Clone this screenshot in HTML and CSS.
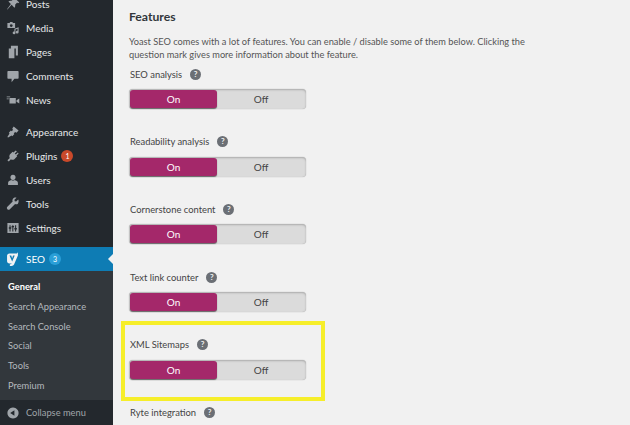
FILE: index.html
```html
<!DOCTYPE html>
<html lang="en">
<head>
<meta charset="utf-8">
<title>Yoast SEO Features</title>
<link rel="stylesheet" href="styles.css">
</head>
<body>
<div class="page">
  <nav class="side">
    <ul class="menu">
      <li class="item"><svg class="ico" viewBox="0 0 20 20"><path d="M12 1l7 7-2 1-1-1-3 3c.5 2 0 3.500-1 4.500L8 11l-6 7-.5-.5L7 10 3.500 6.500C4.500 5.500 6 5 8 5.500l3-3-1-1z"/></svg><span>Posts</span></li>
      <li class="item"><svg class="ico" viewBox="0 0 20 20"><path d="M2 3h3l1-1.500h3L10 3h3v7H2zM7.500 4.500a2 2 0 1 0 .01 0zM12 11l6-2v7a2 2 0 1 1-1.500-2v-3l-3 1v5a2 2 0 1 1-1.500-2z" fill-rule="evenodd"/></svg><span>Media</span></li>
      <li class="item"><svg class="ico" viewBox="0 0 20 20"><path d="M7 1h10v14h-3V5H7zM4 5h8v14H4z"/></svg><span>Pages</span></li>
      <li class="item"><svg class="ico" viewBox="0 0 20 20"><path d="M3 3h14a1 1 0 0 1 1 1v9a1 1 0 0 1-1 1h-5l-4 5v-5H3a1 1 0 0 1-1-1V4a1 1 0 0 1 1-1z"/></svg><span>Comments</span></li>
      <li class="item"><svg class="ico" viewBox="0 0 20 20"><path d="M1 5h5v1H1zM5 7h9v8H5zM15 10.500l4-2.500v7l-4-2.500zM1 8h3v1H1z"/></svg><span>News</span></li>
      <li class="item group"><svg class="ico" viewBox="0 0 20 20"><path d="M11 2l7 6-3 3-2-1-2 2 1 1-3 3-1-1-5 3-1-1 3-5-1-1 3-3 1 1 2-2-1-2z"/></svg><span>Appearance</span></li>
      <li class="item"><svg class="ico" viewBox="0 0 20 20"><path d="M14 2l1.500 1.500-3 3 1.500 1.500 3-3L18 6.500l-3 3 1 1-4 4c-2 1-3.500 1-5 0L4 18l-2-2 3.500-3c-1-1.500-1-3 0-5l4-4 1 1z"/></svg><span>Plugins</span><b class="badge red">1</b></li>
      <li class="item"><svg class="ico" viewBox="0 0 20 20"><path d="M10 2.500a3.700 3.700 0 1 1-.01 0zM3 17v-3c0-2 2.500-3.500 4.500-4 1.500 1 3.500 1 5 0 2 .5 4.500 2 4.500 4v3z"/></svg><span>Users</span></li>
      <li class="item"><svg class="ico" viewBox="0 0 20 20"><path d="M17.500 3.500l-3 3-2-.5-.5-2 3-3c-2-.5-4 0-5 1.500-1 1-1 3-.5 4L2 14c-1 1-1 2.500 0 3.500s2.500 1 3.500 0L13 10c1.500.5 3 .5 4-.5 1-1.500 1.500-4 .5-6z"/></svg><span>Tools</span></li>
      <li class="item"><svg class="ico" viewBox="0 0 20 20"><path d="M2 3h16v14H2zM5 6v3H4v2h1v4h1.500v-4h1V9h-1V6zM13 6v4h-1v2h1v3h1.500v-3h1v-2h-1V6zM9 6v1H8v2h1v6h1.500V9h1V7h-1V6z" fill-rule="evenodd"/></svg><span>Settings</span></li>
      <li class="item current"><svg class="ico yoast" viewBox="0 0 20 20"><path d="M5 2h10.500L17 .5V5l-5.500 13c-.7 1.300-2 2-3.500 2H5.500v-2.200c1.300 0 2-.4 2.500-1.300H5c-2.200 0-3.500-1.300-3.500-3.500V5.500C1.500 3.300 2.800 2 5 2zM5 5l3.800 8.500L12.500 5H10L8.800 9 7.500 5z" fill-rule="evenodd"/></svg><span>SEO</span><b class="badge blue">3</b></li>
    </ul>
    <ul class="sub">
      <li class="strong">General</li>
      <li>Search Appearance</li>
      <li>Search Console</li>
      <li>Social</li>
      <li>Tools</li>
      <li>Premium</li>
    </ul>
    <div class="collapse"><svg class="ico" viewBox="0 0 20 20"><path d="M10 2a8 8 0 1 1-.01 0zM12 6l-6 4 6 4z" fill-rule="evenodd"/></svg><span>Collapse menu</span></div>
  </nav>
  <main class="main">
    <h2 class="title">Features</h2>
    <p class="intro">Yoast SEO comes with a lot of features. You can enable / disable some of them below. Clicking the question mark gives more information about the feature.</p>
    <div class="feature"><div class="label">SEO analysis <i class="help">?</i></div><div class="toggle"><span class="on">On</span><span class="off">Off</span></div></div>
    <div class="feature"><div class="label">Readability analysis <i class="help">?</i></div><div class="toggle"><span class="on">On</span><span class="off">Off</span></div></div>
    <div class="feature"><div class="label">Cornerstone content <i class="help">?</i></div><div class="toggle"><span class="on">On</span><span class="off">Off</span></div></div>
    <div class="feature"><div class="label">Text link counter <i class="help">?</i></div><div class="toggle"><span class="on">On</span><span class="off">Off</span></div></div>
    <div class="feature"><div class="label">XML Sitemaps <i class="help">?</i></div><div class="toggle"><span class="on">On</span><span class="off">Off</span></div><div class="highlight"></div></div>
    <div class="feature"><div class="label">Ryte integration <i class="help">?</i></div></div>
  </main>
</div>
</body>
</html>
```
FILE: styles.css
```css
* { box-sizing: border-box; }
html, body { margin: 0; height: 100%; overflow: hidden; }
body { background: #f1f1f1; font-family: Lato, "Open Sans", sans-serif; font-size: 10px; color: #444; }
.page { display: flex; height: 425px; overflow: hidden; }
.side { width: 113px; flex: none; background: #23282d; color: #e6e8ea; display: flex; flex-direction: column; height: 425px; }
.menu { list-style: none; margin: -8px 0 0; padding: 0; }
.item { display: flex; align-items: center; height: 24px; padding-left: 6px; gap: 6px; position: relative; }
.item.group { margin-top: 8px; }
.item.current { background: #0e7cb4; color: #fff; margin-top: 7px; }
.item.current::after { content: ""; position: absolute; right: 0; top: 7px; border: 5px solid transparent; border-right-color: #f1f1f1; border-left-width: 0; }
.ico { width: 14px; height: 14px; fill: #a0a5aa; flex: none; }
.yoast { fill: #f1f3f4; }
.badge { width: 12px; height: 12px; border-radius: 50%; font-size: 7px; font-weight: 400; line-height: 12px; text-align: center; color: #fff; margin-left: -2px; }
.red { background: #c9492a; }
.blue { background: #2a9fd8; }
.sub { list-style: none; margin: 0; padding: 6px 0 0 8px; flex: 1; background: #32373c; color: #b4b9be; }
.sub li { height: 19.800px; line-height: 19.800px; font-size: 9.300px; }
.sub .strong { color: #fff; font-weight: 700; }
.collapse { display: flex; align-items: center; height: 25px; padding-left: 6px; gap: 6px; font-size: 9.300px; color: #a0a5aa; background: #23282d; }
.main { flex: 1; padding: 9px 0 0 16px; position: relative; }
.title { margin: 0; font-size: 12.200px; font-weight: 700; color: #32373c; line-height: 16px; }
.intro { margin: 10px 0 0; width: 410px; font-size: 9.250px; line-height: 13px; color: #555; }
.feature { position: relative; height: 67.700px; }
.intro + .feature { margin-top: 6px; }
.label { display: flex; align-items: center; gap: 8px; height: 14px; font-size: 9.400px; color: #444; padding-left: 1px; }
.help { width: 11px; height: 11px; border-radius: 50%; background: #6b6f75; color: #f1f1f1; font-style: normal; font-weight: 700; font-size: 8px; line-height: 11px; text-align: center; }
.toggle { display: flex; width: 177px; height: 20px; margin-top: 8px; border-radius: 4px; background: #dbdbdb; box-shadow: inset 0 1px 2px #aaa, 0 0 1px #999; font-size: 10px; padding: 1px; }
.toggle span { display: flex; align-items: center; justify-content: center; }
.on { width: 87px; background: #a4286a; color: #fff; border-radius: 3px; box-shadow: 0 1px 1px #666; }
.off { flex: 1; color: #444; }
.highlight { position: absolute; left: -8px; top: -17px; width: 204px; height: 80px; border: 4px solid #f6ee2a; pointer-events: none; }
```
